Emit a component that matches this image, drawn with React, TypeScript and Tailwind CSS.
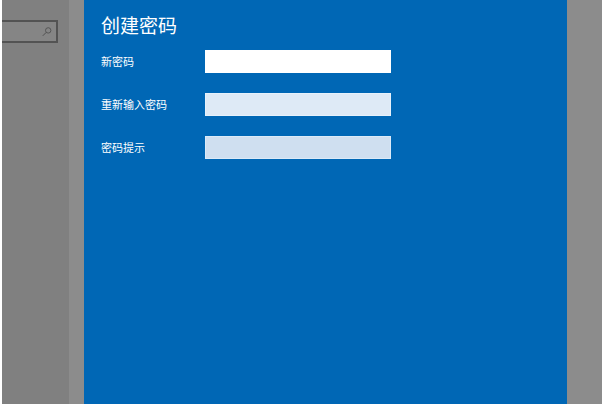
import React from 'react'

type Field = {
  id: string
  label: string
  type: 'password' | 'text'
  inputClass: string
}

const fields: Field[] = [
  {
    id: 'new-password',
    label: '新密码',
    type: 'password',
    inputClass: 'border-white bg-white',
  },
  {
    id: 'confirm-password',
    label: '重新输入密码',
    type: 'password',
    inputClass: 'border-[#e6f1fb] bg-[#deeaf6]',
  },
  {
    id: 'password-hint',
    label: '密码提示',
    type: 'text',
    inputClass: 'border-[#dbeaf8] bg-[#cfdff0]',
  },
]

const SearchIcon: React.FC = () => (
  <svg
    className="size-[10px] shrink-0"
    viewBox="0 0 10 10"
    fill="none"
    stroke="#505050"
    aria-hidden="true"
  >
    <circle cx="6.2" cy="3.4" r="2.7" strokeWidth="0.9" />
    <path d="M4.2 5.4 0.8 8.8" />
  </svg>
)

const Sidebar: React.FC = () => (
  <aside className="w-[67px] shrink-0 bg-[#808080] pr-[11px] pt-5">
    <div className="flex h-[23px] items-center border-y-2 border-r-2 border-[#535353] bg-[#858585] pr-1">
      <input
        type="search"
        aria-label="搜索"
        className="min-w-0 flex-1 bg-transparent text-[11px] outline-none"
      />
      <SearchIcon />
    </div>
  </aside>
)

const PasswordDialog: React.FC = () => (
  <form className="flex-1 bg-[#0067b5] pl-[17px] pr-4 pt-[10px] text-white">
    <h1 className="text-[19px] leading-[30px]">创建密码</h1>
    <div className="mt-[10px] flex flex-col gap-5">
      {fields.map(({ id, label, type, inputClass }) => (
        <div key={id} className="flex items-center">
          <label htmlFor={id} className="w-[104px] shrink-0 text-[11px]">
            {label}
          </label>
          <input
            id={id}
            type={type}
            className={`h-[23px] w-[186px] border px-1 text-[11px] text-black outline-none ${inputClass}`}
          />
        </div>
      ))}
    </div>
  </form>
)

const App: React.FC = () => {
  return (
    <div className="flex min-h-screen bg-white pb-px pl-0.5 font-['Noto_Sans_CJK_SC',sans-serif]">
      <Sidebar />
      <div className="flex flex-1 bg-[#8c8c8c] pl-[15px] pr-[35px]">
        <PasswordDialog />
      </div>
    </div>
  )
}

export default App
